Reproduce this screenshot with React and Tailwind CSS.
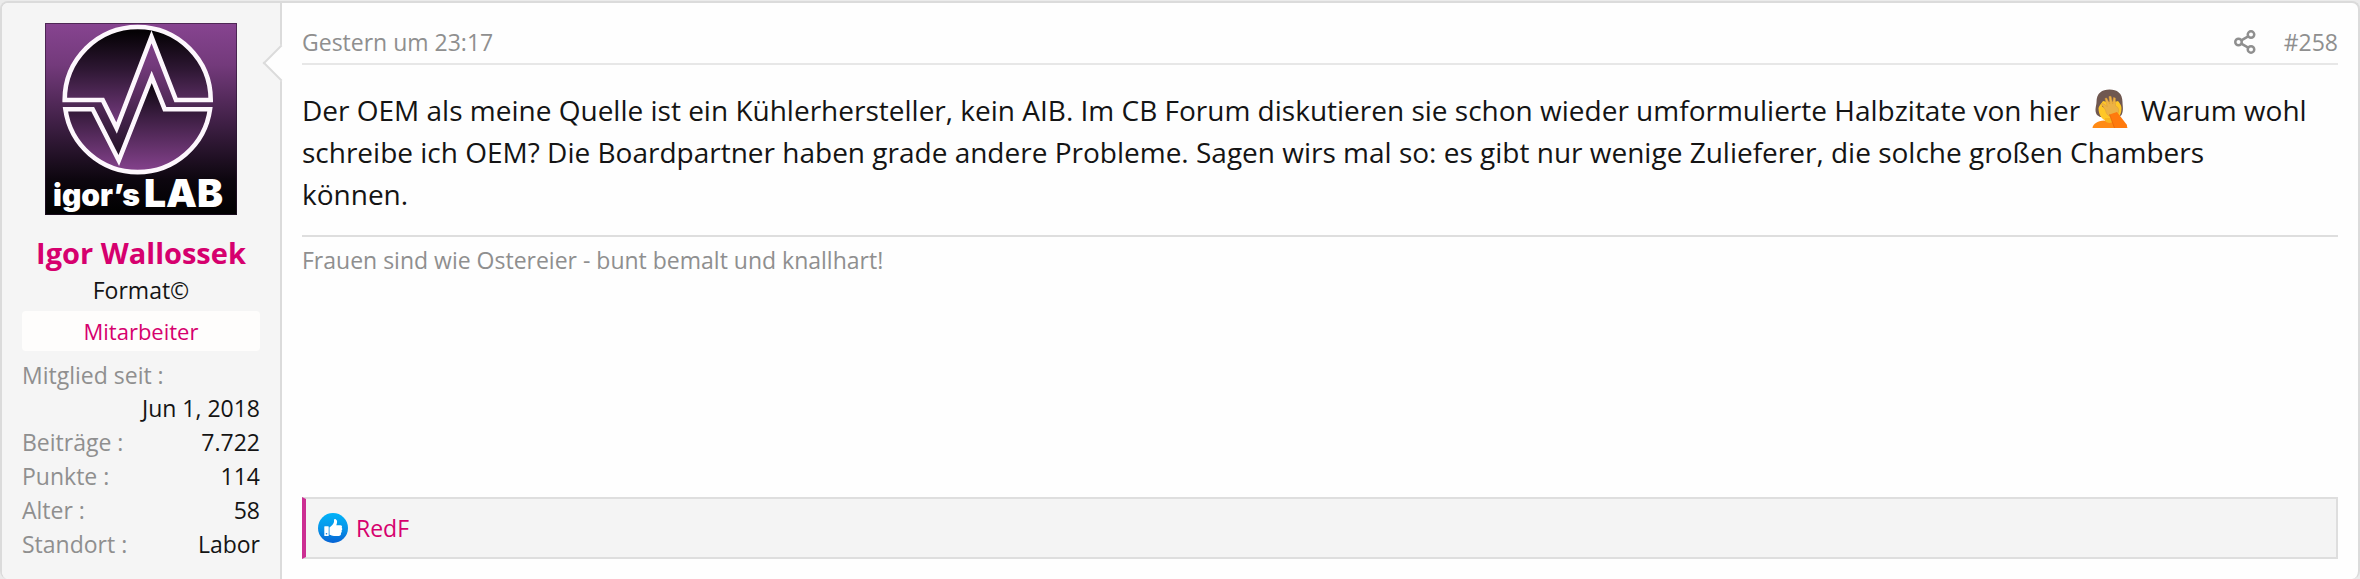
function Avatar() {
  return (
    <svg viewBox="0 0 192 192" className="block size-48" role="img" aria-label="Igor Wallossek">
      <defs>
        <linearGradient id="back" x1="0" y1="0" x2="0" y2="1">
          <stop offset="0" stopColor="#874490" />
          <stop offset="0.22" stopColor="#733a7b" />
          <stop offset="0.55" stopColor="#3a1d40" />
          <stop offset="0.82" stopColor="#0c060e" />
          <stop offset="1" stopColor="#000" />
        </linearGradient>
        <linearGradient id="upper" gradientUnits="userSpaceOnUse" x1="0" y1="4" x2="0" y2="106">
          <stop offset="0.05" stopColor="#050205" />
          <stop offset="0.4" stopColor="#2c1631" />
          <stop offset="1" stopColor="#7e3f88" />
        </linearGradient>
        <linearGradient id="lower" gradientUnits="userSpaceOnUse" x1="0" y1="54" x2="0" y2="150">
          <stop offset="0.05" stopColor="#0a040b" />
          <stop offset="0.4" stopColor="#3a1d40" />
          <stop offset="1" stopColor="#87438f" />
        </linearGradient>
      </defs>
      <rect width="192" height="192" fill="url(#back)" />
      <g stroke="#fdf7fd" strokeWidth="4.6" strokeMiterlimit="10">
        <path d="M19.7 77H57.7L71.6 105L106.5 14L131 77H165.7A73 73 0 0 0 19.7 77Z" fill="url(#upper)" />
        <path d="M20.4 86.2H47.7L73.8 137.5L106.7 54L119.7 86.2H165A73 73 0 0 1 20.4 86.2Z" fill="url(#lower)" />
      </g>
      <rect x="0.5" y="0.5" width="191" height="191" fill="none" stroke="#2a1430" strokeOpacity="0.6" />
      <g fill="#fff" fontFamily="Inter, 'Open Sans', sans-serif" fontWeight="900">
        <text x="8" y="183" fontSize="30">igor’s</text>
        <text x="99" y="184" fontSize="39">LAB</text>
      </g>
    </svg>
  );
}

function Facepalm() {
  return (
    <svg viewBox="0 0 36 40" className="mx-[5px] inline-block h-10 w-9 align-[-8px]" role="img" aria-label="Facepalm">
      <path d="M5 26C2 21 4.500 17 4.500 13C4.500 4 10 0.500 17.500 0.500S30.500 4 30.500 13C30.500 17 32 21 29.500 26L27 28H8Z" fill="#705850" />
      <path d="M6.500 19C7.500 16 9.500 14.500 11 12C16 13.500 22 13 26 12C27.500 14 29.500 16 29.500 19C29.500 27 25 32.500 18 32.500S6.500 27 6.500 19Z" fill="#ffc727" />
      <path d="M13 29H23V36H13Z" fill="#f9b520" />
      <path d="M0.500 39C1 35 5 32 12.500 31.500C15 34.500 20 35 22 31.500C30 32 35 35 35.500 39Z" fill="#ff8a14" />
      <path d="M10.500 17L13 18" stroke="#5d4436" strokeWidth="1.500" fill="none" />
      <path d="M13.500 21L9.500 15.500L10.800 14.300L15.300 17.500L13 9.500L14.600 9L17.800 15L17 7.500L19 7.300L20.700 15L21.500 8.500L23.300 9L23.500 17C26 17.500 27 20 26.500 23L25 26L18 27.500C15 26 14 24 13.500 21Z" fill="#ecb245" stroke="#dd9a38" strokeWidth="0.500" />
      <path d="M17.500 25.500L25 23L35 36L34.500 39H22.500Z" fill="#ff7a0d" />
      <path d="M17.500 25.500L22.500 39" stroke="#e2620a" strokeWidth="0.700" />
    </svg>
  );
}

function ShareIcon() {
  return (
    <svg viewBox="0 0 22 24" className="h-6 w-[22px]" fill="none" stroke="currentColor" strokeWidth="2.500" aria-hidden="true">
      <circle cx="4.500" cy="12" r="3.250" />
      <circle cx="17" cy="4.600" r="3.250" />
      <circle cx="17" cy="19.400" r="3.250" />
      <path d="M7.300 10.300L14.200 6.300M7.300 13.700L14.200 17.700" />
    </svg>
  );
}

function LikeIcon() {
  return (
    <svg viewBox="0 0 30 30" className="size-[30px]" role="img" aria-label="Like">
      <defs>
        <linearGradient id="like" x1="0" y1="0" x2="0" y2="1">
          <stop offset="0" stopColor="#00b2f8" />
          <stop offset="0.5" stopColor="#0796e9" />
          <stop offset="1" stopColor="#0562d4" />
        </linearGradient>
      </defs>
      <circle cx="15" cy="15" r="15" fill="url(#like)" />
      <rect x="6.300" y="13.200" width="4.400" height="9.800" rx="0.600" fill="#fff" />
      <circle cx="8.500" cy="20.700" r="0.800" fill="#0780df" />
      <path d="M11.500 14.500C13.500 13 15.500 11 16 9V7.200C16 6.200 17 5.900 17.700 6.200C19.600 7 19.400 9.500 18.300 12.200H22.500C24 12.200 24.500 13.700 23.700 14.800C24.600 15.600 24.400 17 23.500 17.600C24.100 18.500 23.700 19.600 22.900 20.100C23.300 21.500 22.600 22.900 21 22.900H16C14 22.900 13 22 11.500 21.800Z" fill="#fff" />
    </svg>
  );
}

const stats = [
  ["Beiträge", "7.722"],
  ["Punkte", "114"],
  ["Alter", "58"],
  ["Standort", "Labor"],
];

export default function App() {
  return (
    <div className="bg-[#ebebeb] pt-px font-['Segoe_UI','Open_Sans','Noto_Sans',sans-serif] text-[23px] leading-[34px] text-[#141414]">
      <article className="flex overflow-hidden rounded-lg border-2 border-b-0 border-[#dbdbdb] bg-[#fefefe]">
        <aside className="w-[280px] shrink-0 border-r-2 border-[#dbdbdb] bg-[#f5f5f5] px-5 pt-5 pb-[18px]">
          <div className="flex flex-col items-center">
            <a href="#avatar"><Avatar /></a>
            <h4 className="mt-5 text-[29px] leading-9 font-bold whitespace-nowrap text-[#d6006e]">
              <a href="#profile">Igor Wallossek</a>
            </h4>
            <div className="mt-0.5">Format©</div>
            <div className="mt-1 w-full rounded bg-[#fefdfc] text-center text-[22px] leading-10 text-[#d6006e]">Mitarbeiter</div>
          </div>
          <dl className="mt-[7px]">
            <dt className="text-[#8f8f8f]">Mitglied seit :</dt>
            <dd className="text-right leading-[33px]">Jun 1, 2018</dd>
            {stats.map(([label, value]) => (
              <div key={label} className="flex justify-between">
                <dt className="text-[#8f8f8f]">{label} :</dt>
                <dd>{value}</dd>
              </div>
            ))}
          </dl>
        </aside>
        <main className="relative flex min-w-0 grow flex-col p-5">
          <span className="absolute top-[47px] -left-3.5 size-[26px] rotate-45 border-b-2 border-l-2 border-[#dbdbdb] bg-[#fefefe]" />
          <header className="flex items-center justify-between border-b-2 border-[#e7e7e7] pt-0.5 pb-1 text-[#8f8f8f]">
            <a href="#post-258"><time>Gestern um 23:17</time></a>
            <div className="flex items-center gap-7">
              <a href="#share" aria-label="Teilen"><ShareIcon /></a>
              <a href="#post-258">#258</a>
            </div>
          </header>
          <p className="mt-6 text-[28px] leading-[42px]">
            Der OEM als meine Quelle ist ein Kühlerhersteller, kein AIB. Im CB Forum diskutieren sie schon wieder umformulierte Halbzitate von hier <Facepalm /> Warum wohl schreibe ich OEM? Die Boardpartner haben grade andere Probleme. Sagen wirs mal so: es gibt nur wenige Zulieferer, die solche großen Chambers
            <br />
            können.
          </p>
          <div className="mt-5 border-t-2 border-[#dedede] pt-1.5 text-[#8f8f8f]">
            Frauen sind wie Ostereier - bunt bemalt und knallhart!
          </div>
          <div className="mt-auto flex items-center gap-2 border-2 border-l-4 border-[#dedede] border-l-[#cc2e92] bg-[#f4f4f4] px-3 py-3">
            <LikeIcon />
            <a href="#reactions" className="text-[#d6006e]">RedF</a>
          </div>
        </main>
      </article>
    </div>
  );
}
